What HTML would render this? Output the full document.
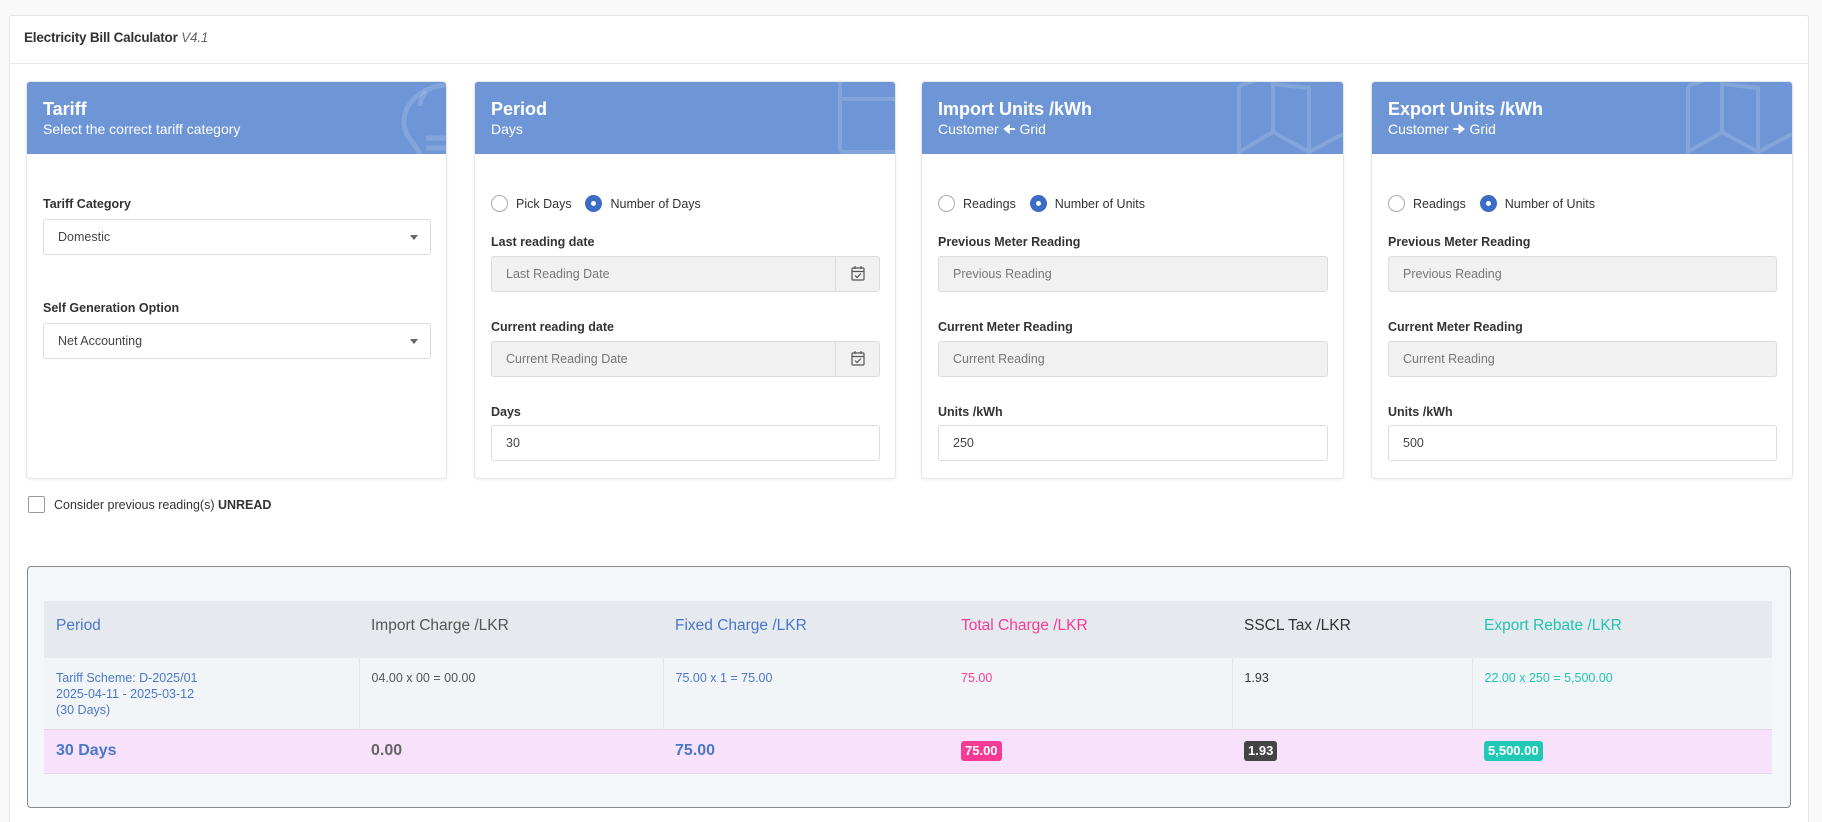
<!DOCTYPE html>
<html style="height:822px;overflow:hidden"><head><meta charset="utf-8"><style>
*{box-sizing:border-box;margin:0;padding:0}
body{width:1822px;height:822px;background:#f9f9f9;font-family:"Liberation Sans",sans-serif;color:#333;position:relative;overflow:hidden}
.outer{position:absolute;left:9px;top:15px;width:1800px;height:807px;background:#fff;border:1px solid #e4e4e4;border-bottom:none;border-radius:3px 3px 0 0}
.title{position:absolute;left:14px;top:14px;font-size:13.5px;font-weight:bold;color:#333;letter-spacing:-0.2px}
.title i{font-weight:normal;color:#666}
.hline{position:absolute;left:0;right:0;top:47px;border-top:1px solid #e8e8e8}
.card{position:absolute;top:81px;height:398px;background:#fff;border:1px solid #e6e6e6;border-radius:4px;box-shadow:0 1px 3px rgba(0,0,0,.06);overflow:hidden}
.ch{height:72px;background:#6e96d6;color:#fff;padding:17px 16px;position:relative;overflow:hidden}
.ch b{display:block;font-size:18px;line-height:20px}
.ch span{display:block;font-size:14px;line-height:19px;margin-top:1px}
.ch svg{position:absolute;right:0;top:0}
.lbl{position:absolute;left:16px;font-size:12.5px;font-weight:bold;color:#333}
.inp{position:absolute;left:16px;right:15px;height:36px;border:1px solid #dcdcdc;border-radius:3px;font-size:12.5px;color:#444;padding:10px 14px;background:#fff}
.dis{background:#f1f1f1;color:#777}
.arrow{position:absolute;right:12px;top:15px;width:0;height:0;border-left:4px solid transparent;border-right:4px solid transparent;border-top:5px solid #666}
.cal{position:absolute;right:0;top:0;width:44px;height:34px;border-left:1px solid #dcdcdc}
.radios{position:absolute;left:16px;top:113px;font-size:12.5px;color:#333;display:flex;align-items:center}
.r{width:17px;height:17px;border-radius:50%;border:1.5px solid #aaa;display:inline-block;margin-right:8px}
.r.on{border:none;background:#3c6cc4;position:relative}
.r.on:after{content:"";position:absolute;left:6px;top:6px;width:5px;height:5px;border-radius:50%;background:#fff}
.res{position:absolute;left:27px;top:566px;width:1764px;height:242px;background:#f4f7fa;border:1px solid #888;border-radius:4px}
table{position:absolute;left:16px;top:34px;width:1728px;border-collapse:collapse}
td{padding:0 12px;vertical-align:middle;font-size:12.5px}
tr.h td{height:57px;background:#e6e9ed;font-size:15.5px;padding-bottom:8px}
tr.d td{height:71px;background:#f2f5f8;vertical-align:top;padding-top:12px;border-right:1px solid #e2e5e8;line-height:16px}
tr.t td{height:44px;background:#f8e1fa;font-size:16px;font-weight:bold;border-top:1px solid #e8d4ea;border-bottom:1px solid #e4d8e6}
.bl{color:#4a78c8}.gy{color:#555}.pk{color:#f73b95}.dk{color:#333}.tl{color:#20c4b2}
tr.t .gy{color:#666}
.badge{display:inline-block;color:#fff;font-size:13px;padding:2px 4px;border-radius:3px;line-height:16px}
</style></head><body>
<div class="outer">
<div class="title">Electricity Bill Calculator <i>V4.1</i></div>
<div class="hline"></div>
</div>

<!-- Tariff -->
<div class="card" style="left:26px;width:421px">
<div class="ch"><b>Tariff</b><span>Select the correct tariff category</span>
<svg width="60" height="72" viewBox="0 0 60 72" fill="none" stroke="rgba(255,255,255,.15)" stroke-width="5"><path d="M70 2 C40 2 18 18 18 40 C18 55 30 62 34 72"/><path d="M40 10 C36 14 34 20 34 24"/><path d="M40 56 H62 M40 66 H62"/></svg></div>
<div class="lbl" style="top:115px">Tariff Category</div>
<div class="inp" style="top:137px">Domestic<div class="arrow"></div></div>
<div class="lbl" style="top:219px">Self Generation Option</div>
<div class="inp" style="top:241px">Net Accounting<div class="arrow"></div></div>
</div>

<!-- Period -->
<div class="card" style="left:474px;width:422px">
<div class="ch"><b>Period</b><span>Days</span>
<svg width="60" height="72" viewBox="0 0 60 72" fill="none" stroke="rgba(255,255,255,.15)" stroke-width="4"><path d="M5 0 V66 Q5 70 10 70 H62 M5 17 H62"/></svg></div>
<div class="radios"><span class="r"></span>Pick Days&nbsp;&nbsp;&nbsp;&nbsp;<span class="r on"></span>Number of Days</div>
<div class="lbl" style="top:153px">Last reading date</div>
<div class="inp dis" style="top:174px">Last Reading Date<div class="cal"><svg width="44" height="34" viewBox="0 0 44 34" fill="none" stroke="#555" stroke-width="1.2"><rect x="16" y="11" width="12" height="12" rx="1"/><path d="M16 14.5H28M19 9V12M25 9V12M19 18.5L21 20.5L25 16.5"/></svg></div></div>
<div class="lbl" style="top:238px">Current reading date</div>
<div class="inp dis" style="top:259px">Current Reading Date<div class="cal"><svg width="44" height="34" viewBox="0 0 44 34" fill="none" stroke="#555" stroke-width="1.2"><rect x="16" y="11" width="12" height="12" rx="1"/><path d="M16 14.5H28M19 9V12M25 9V12M19 18.5L21 20.5L25 16.5"/></svg></div></div>
<div class="lbl" style="top:323px">Days</div>
<div class="inp" style="top:343px">30</div>
</div>

<!-- Import -->
<div class="card" style="left:921px;width:423px">
<div class="ch"><b>Import Units /kWh</b><span>Customer &#129032; Grid</span>
<svg width="108" height="72" viewBox="0 0 108 72" fill="none" stroke="rgba(255,255,255,.15)" stroke-width="4"><path d="M4 4 V70 L38 50 L74 70 L108 52 M4 4 L38 -8 M38 -8 V50 M74 4 V70 M38 2 L74 6"/></svg></div>
<div class="radios"><span class="r"></span>Readings&nbsp;&nbsp;&nbsp;&nbsp;<span class="r on"></span>Number of Units</div>
<div class="lbl" style="top:153px">Previous Meter Reading</div>
<div class="inp dis" style="top:174px">Previous Reading</div>
<div class="lbl" style="top:238px">Current Meter Reading</div>
<div class="inp dis" style="top:259px">Current Reading</div>
<div class="lbl" style="top:323px">Units /kWh</div>
<div class="inp" style="top:343px">250</div>
</div>

<!-- Export -->
<div class="card" style="left:1371px;width:422px">
<div class="ch"><b>Export Units /kWh</b><span>Customer &#129034; Grid</span>
<svg width="108" height="72" viewBox="0 0 108 72" fill="none" stroke="rgba(255,255,255,.15)" stroke-width="4"><path d="M4 4 V70 L38 50 L74 70 L108 52 M4 4 L38 -8 M38 -8 V50 M74 4 V70 M38 2 L74 6"/></svg></div>
<div class="radios"><span class="r"></span>Readings&nbsp;&nbsp;&nbsp;&nbsp;<span class="r on"></span>Number of Units</div>
<div class="lbl" style="top:153px">Previous Meter Reading</div>
<div class="inp dis" style="top:174px">Previous Reading</div>
<div class="lbl" style="top:238px">Current Meter Reading</div>
<div class="inp dis" style="top:259px">Current Reading</div>
<div class="lbl" style="top:323px">Units /kWh</div>
<div class="inp" style="top:343px">500</div>
</div>

<div style="position:absolute;left:28px;top:496px;width:17px;height:17px;border:1.5px solid #999;border-radius:2px;background:#fff"></div>
<div style="position:absolute;left:54px;top:498px;font-size:12.5px;color:#333">Consider previous reading(s) <b>UNREAD</b></div>

<div class="res">
<table>
<tr class="h"><td class="bl" style="width:315px">Period</td><td class="gy" style="width:304px">Import Charge /LKR</td><td class="bl" style="width:286px">Fixed Charge /LKR</td><td class="pk" style="width:283px">Total Charge /LKR</td><td class="dk" style="width:240px">SSCL Tax /LKR</td><td class="tl">Export Rebate /LKR</td></tr>
<tr class="d"><td class="bl">Tariff Scheme: D-2025/01<br>2025-04-11 - 2025-03-12<br>(30 Days)</td><td class="gy">04.00 x 00 = 00.00</td><td class="bl" style="border-right:none">75.00 x 1 = 75.00</td><td class="pk">75.00</td><td class="dk">1.93</td><td class="tl" style="border-right:none">22.00 x 250 = 5,500.00</td></tr>
<tr class="t"><td class="bl">30 Days</td><td class="gy">0.00</td><td class="bl">75.00</td><td><span class="badge" style="background:#f73b95">75.00</span></td><td><span class="badge" style="background:#444">1.93</span></td><td><span class="badge" style="background:#20c9b5">5,500.00</span></td></tr>
</table>
</div>
</body></html>
